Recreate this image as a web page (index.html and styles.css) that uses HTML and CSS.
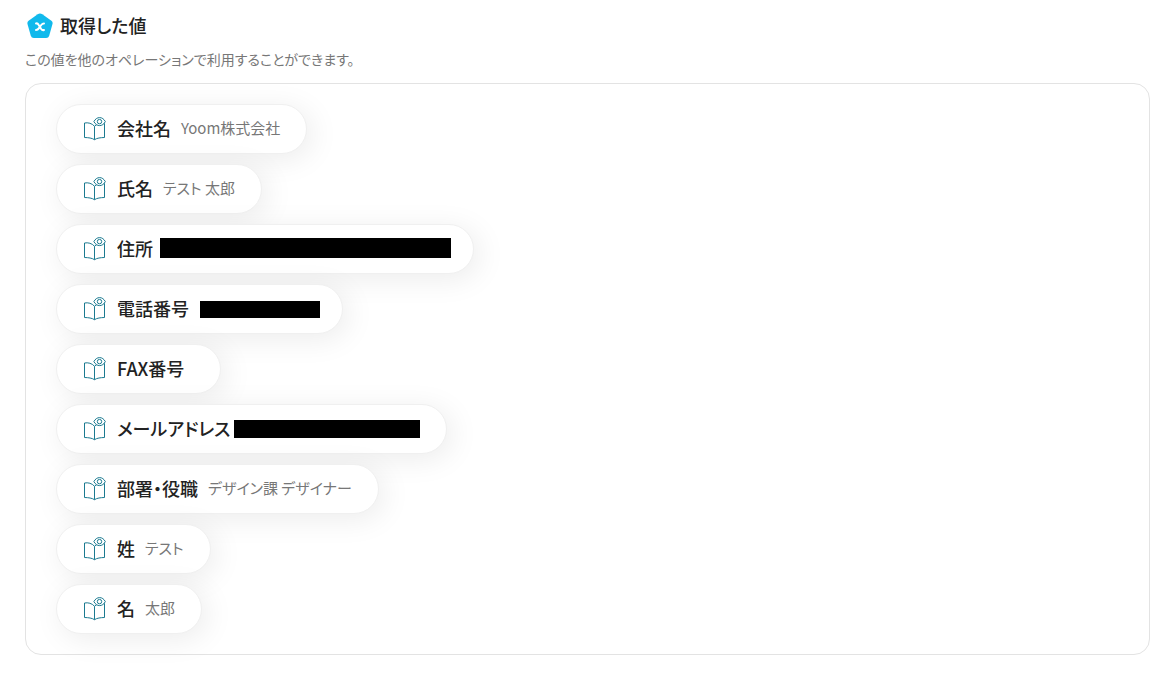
FILE: index.html
```
<!DOCTYPE html>
<html lang="ja">
<head>
<meta charset="utf-8">
<meta name="viewport" content="width=device-width, initial-scale=1">
<title>取得した値</title>
<link rel="stylesheet" href="styles.css">
</head>
<body>
<svg class="sprite" aria-hidden="true">
  <symbol id="book" viewBox="0 0 24 24">
    <path d="M1.5 6C5 5.3 9 6.3 11.5 9.3C14 6.8 17.5 6 21.5 6.3V20.5C17.5 20.6 14 21 11.5 22.7C9 21 5.5 20.6 1.5 20.5ZM11.5 9.3V22.7" />
    <path class="eye" d="M10.9 4.6C12.2 2 14.2 .6 16.6 .6S21 2 22.3 4.6C21 7.2 19 8.6 16.6 8.6S12.2 7.2 10.9 4.6Z" />
    <circle cx="16.5" cy="4.6" r="2.2" />
  </symbol>
</svg>
<main class="page">
  <h1 class="title">
    <svg class="badge" viewBox="0 0 26 26" aria-hidden="true">
      <path class="badge-shape" d="M10.7 1.2Q13 -.2 15.3 1.2L24.4 7.8Q26 9 25.5 11L22.2 22.8Q21.5 25 19.2 25H6.8Q4.5 25 3.8 22.8L.5 11Q0 9 1.6 7.8Z" />
      <path class="badge-mark" d="M9 10.5Q10.6 10 11.4 11.5L14.2 16Q15.2 17.5 17 17M17 10.5Q15.4 10.5 14.2 12L11.8 15.4Q10.8 17 9 17" />
    </svg>
    <span class="title-text">取得した値</span>
  </h1>
  <p class="note">この値を他のオペレーションで利用することができます。</p>
  <ul class="values">
    <li class="chip"><svg class="icon" aria-hidden="true"><use href="#book" /></svg><span class="label">会社名</span><span class="value">Yoom株式会社</span></li>
    <li class="chip"><svg class="icon" aria-hidden="true"><use href="#book" /></svg><span class="label">氏名</span><span class="value">テスト 太郎</span></li>
    <li class="chip"><svg class="icon" aria-hidden="true"><use href="#book" /></svg><span class="label">住所</span><span class="mask mask-address"></span></li>
    <li class="chip"><svg class="icon" aria-hidden="true"><use href="#book" /></svg><span class="label">電話番号</span><span class="mask mask-phone"></span></li>
    <li class="chip"><svg class="icon" aria-hidden="true"><use href="#book" /></svg><span class="label">FAX番号</span><span class="value"></span></li>
    <li class="chip"><svg class="icon" aria-hidden="true"><use href="#book" /></svg><span class="label">メールアドレス</span><span class="mask mask-mail"></span></li>
    <li class="chip"><svg class="icon" aria-hidden="true"><use href="#book" /></svg><span class="label">部署・役職</span><span class="value">デザイン課 デザイナー</span></li>
    <li class="chip"><svg class="icon" aria-hidden="true"><use href="#book" /></svg><span class="label">姓</span><span class="value">テスト</span></li>
    <li class="chip"><svg class="icon" aria-hidden="true"><use href="#book" /></svg><span class="label">名</span><span class="value">太郎</span></li>
  </ul>
</main>
</body>
</html>
```
FILE: styles.css
```
* { box-sizing: border-box; }

body {
  margin: 0;
  background: #fff;
  color: #222;
  font-family: "Noto Sans CJK JP", sans-serif;
  font-feature-settings: "palt";
}

.sprite { position: absolute; width: 0; height: 0; }

.page { padding: 12px 25px 24px; }

.title {
  display: flex;
  align-items: center;
  gap: 7px;
  margin: 0;
  padding-left: 2px;
  font-size: 18px;
  font-weight: 500;
  line-height: 26px;
}

.title-text { padding-bottom: 2px; }

.badge { width: 26px; height: 26px; }
.badge-shape { fill: #11b9ec; }
.badge-mark {
  fill: none;
  stroke: #fff;
  stroke-width: 2;
  stroke-linecap: round;
}

.note {
  margin: 7px 0 12px;
  color: #777;
  font-size: 14px;
  line-height: 24px;
}

.values {
  display: flex;
  flex-direction: column;
  align-items: flex-start;
  gap: 10px;
  margin: 0;
  padding: 20px 30px;
  border: 1px solid #e3e3e3;
  border-radius: 16px;
  list-style: none;
}

.chip {
  display: flex;
  align-items: center;
  min-height: 50px;
  padding: 0 26px;
  border: 1px solid #f0f0f0;
  border-radius: 25px;
  background: #fff;
  box-shadow: 5px 5px 30px rgba(0, 0, 0, 0.08);
}

.icon {
  width: 24px;
  height: 24px;
  margin-right: 10px;
  overflow: visible;
  fill: none;
  stroke: #1b7a90;
  stroke-width: 1;
  stroke-linejoin: round;
}
.eye { fill: #fff; }

.label {
  padding-bottom: 2px;
  font-size: 18px;
  font-weight: 500;
  line-height: 26px;
}

.value {
  margin-left: 10px;
  padding-bottom: 2px;
  color: #777;
  font-size: 15px;
  line-height: 24px;
}

.mask { background: #000; }
.mask-address { width: 291px; height: 20px; margin: 0 -4px 2px 7px; }
.mask-phone { width: 120px; height: 17px; margin: 0 -4px 0 11px; }
.mask-mail { width: 186px; height: 18px; margin-left: 4px; }
```
